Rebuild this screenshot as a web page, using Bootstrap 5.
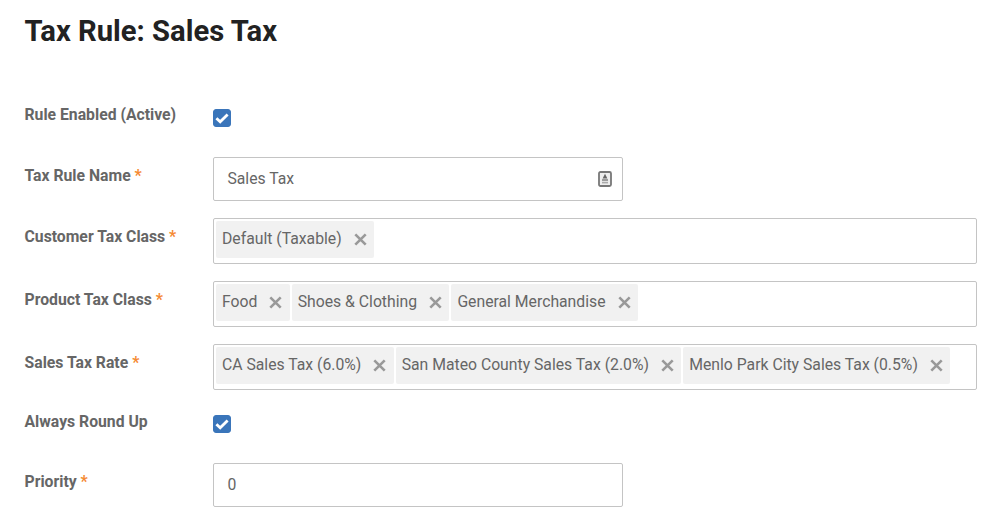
<!DOCTYPE html>
<html lang="en"><head><meta charset="utf-8"><title>Tax Rule</title>
<link href="https://cdn.jsdelivr.net/npm/bootstrap@5.3.0/dist/css/bootstrap.min.css" rel="stylesheet">
<style>
body{font-family:Roboto,"Liberation Sans",sans-serif;color:#666;background:#fff;overflow:hidden}
.sheet{padding:0 13px 0 24px}
.sheet-title{font-size:29.2px;font-weight:700;color:#222;line-height:33px;margin:15px 0 53px .4px}
.field-row{display:flex;margin-bottom:17px}
.field-row.check-row{height:39px;margin-bottom:17px}
.field-label{width:189px;flex:none;font-size:15.75px;font-weight:700;color:#666;line-height:24px;padding:7px 0 0 .5px;margin:0}
.check-row .field-label{padding-top:2px}
.check-row .field-label.label-low{padding-top:3px}
.req{color:#f58a33}
.field-box{flex:1 1 auto;min-width:0}
.check-row .field-box{padding-top:8px}
.form-check-input.tick{width:18px;height:18px;margin:0;border-radius:3px;background-color:#3a75ba;border-color:#3a75ba;display:block;float:none;background-size:18px 18px;background-image:url("data:image/svg+xml,%3csvg xmlns='http://www.w3.org/2000/svg' viewBox='0 0 18 18'%3e%3cpath fill='none' stroke='%23fff' stroke-width='2.8' d='M3.4 9.2 7.2 12.8 14.6 5.4'/%3e%3c/svg%3e")}
.form-control.text-box{width:410px;height:44px;border:1px solid #c4c4c4;border-radius:2px;padding:0 13px 2px 13.4px;font-size:15.75px;color:#666;box-shadow:none}
.input-shell{position:relative;width:410px}
.key-ico{position:absolute;right:11px;top:14px;display:block}
.tag-box{border:1px solid #c4c4c4;border-radius:2px;height:46px;padding:2px;display:flex;gap:2px;background:#fff}
.tag-chip{height:37px;background:#f1f1f1;border-radius:2px;padding:0 7.3px 2px 6px;display:flex;align-items:center;gap:12px;font-size:15.75px;color:#666;white-space:nowrap}
.tag-chip svg{display:block;flex:none;width:13px;height:13px;margin-top:2px}
</style></head>
<body>
<main class="sheet">
<h1 class="sheet-title">Tax Rule: Sales Tax</h1>
<form>
<div class="field-row check-row"><label class="field-label" for="a1">Rule Enabled (Active)</label><div class="field-box"><input id="a1" class="form-check-input tick" type="checkbox" checked></div></div>
<div class="field-row"><label class="field-label" for="a2">Tax Rule Name <span class="req">*</span></label><div class="field-box"><div class="input-shell"><input id="a2" class="form-control text-box" value="Sales Tax">
<svg class="key-ico" width="14" height="16" viewBox="0 0 14 16"><rect x="1" y="1" width="12" height="14" rx="1.5" fill="#eee" stroke="#777" stroke-width="1.8"/><path d="M7 2.8 9.4 7.4H4.6z" fill="#666"/><rect x="4" y="8.2" width="6" height="1.6" fill="#888"/><rect x="4" y="10.8" width="6" height="1.6" fill="#aaa"/></svg></div></div></div>
<div class="field-row"><div class="field-label">Customer Tax Class <span class="req">*</span></div><div class="field-box"><div class="tag-box">
<span class="tag-chip">Default (Taxable)<svg viewBox="0 0 12 12"><path d="M1.2 1.2l9.6 9.6m0-9.6l-9.6 9.6" stroke="#999" stroke-width="2.4"/></svg></span>
</div></div></div>
<div class="field-row"><div class="field-label">Product Tax Class <span class="req">*</span></div><div class="field-box"><div class="tag-box">
<span class="tag-chip">Food<svg viewBox="0 0 12 12"><path d="M1.2 1.2l9.6 9.6m0-9.6l-9.6 9.6" stroke="#999" stroke-width="2.4"/></svg></span>
<span class="tag-chip">Shoes &amp; Clothing<svg viewBox="0 0 12 12"><path d="M1.2 1.2l9.6 9.6m0-9.6l-9.6 9.6" stroke="#999" stroke-width="2.4"/></svg></span>
<span class="tag-chip">General Merchandise<svg viewBox="0 0 12 12"><path d="M1.2 1.2l9.6 9.6m0-9.6l-9.6 9.6" stroke="#999" stroke-width="2.4"/></svg></span>
</div></div></div>
<div class="field-row"><div class="field-label">Sales Tax Rate <span class="req">*</span></div><div class="field-box"><div class="tag-box">
<span class="tag-chip">CA Sales Tax (6.0%)<svg viewBox="0 0 12 12"><path d="M1.2 1.2l9.6 9.6m0-9.6l-9.6 9.6" stroke="#999" stroke-width="2.4"/></svg></span>
<span class="tag-chip">San Mateo County Sales Tax (2.0%)<svg viewBox="0 0 12 12"><path d="M1.2 1.2l9.6 9.6m0-9.6l-9.6 9.6" stroke="#999" stroke-width="2.4"/></svg></span>
<span class="tag-chip">Menlo Park City Sales Tax (0.5%)<svg viewBox="0 0 12 12"><path d="M1.2 1.2l9.6 9.6m0-9.6l-9.6 9.6" stroke="#999" stroke-width="2.4"/></svg></span>
</div></div></div>
<div class="field-row check-row"><label class="field-label label-low" for="a3">Always Round Up</label><div class="field-box"><input id="a3" class="form-check-input tick" type="checkbox" checked></div></div>
<div class="field-row"><label class="field-label" for="a4">Priority <span class="req">*</span></label><div class="field-box"><input id="a4" class="form-control text-box" value="0"></div></div>
</form>
</main>
<script src="https://cdn.jsdelivr.net/npm/bootstrap@5.3.0/dist/js/bootstrap.bundle.min.js"></script>
</body></html>
